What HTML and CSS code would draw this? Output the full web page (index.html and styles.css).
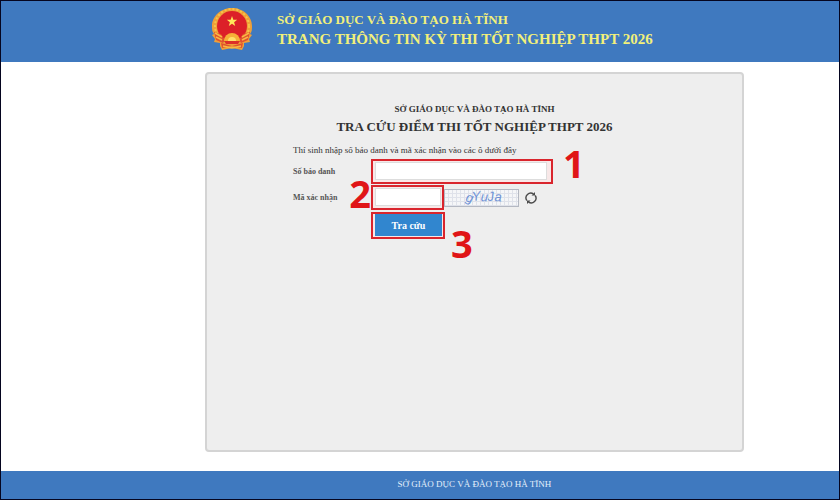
FILE: index.html
```html
<!DOCTYPE html>
<html lang="vi">
<head>
<meta charset="utf-8">
<title>Tra cứu điểm thi tốt nghiệp THPT 2026</title>
<link rel="stylesheet" href="styles.css">
</head>
<body>
<header class="site-header">
  <svg class="emblem" viewBox="0 0 42 44" aria-hidden="true">
    <path fill="#efa038" d="M21 1C10 1 1 9 1 19c0 3 0 6 2 8l-2 1 3 4-1 3 6 1 0 3 2 4 10-2 10 2 2-4 0-3 6-1-1-3 3-4-2-1c2-2 2-5 2-8C41 9 32 1 21 1z"/>
    <circle cx="21" cy="19" r="17" fill="none" stroke="#f6c548" stroke-width="2" stroke-dasharray="2 2"/>
    <circle cx="21" cy="19" r="15" fill="#dc2028"/>
    <path fill="#ffe75a" d="M21 9l1.300 3.700 3.900.100-3.100 2.400 1.100 3.800-3.200-2.200-3.200 2.200 1.100-3.800-3.100-2.400 3.900-.100z"/>
    <path fill="#e0522e" d="M3 25l7 2 4 6-2 3-7-3zM39 25l-7 2-4 6 2 3 7-3zM10 36l11 3 11-3-1 5-10-2-10 2z"/>
    <path fill="none" stroke="#f8b843" stroke-width="1.500" d="M4 26l7 4M5 30l6 3M38 26l-7 4M37 30l-6 3M12 39l9 2 9-2"/>
    <path fill="#f6b038" d="M13 34a8 8 0 0 1 16 0z"/>
    <path fill="#ffe069" d="M17 34a4 4 0 0 1 8 0z"/>
    <path fill="#dc3028" d="M13 34h16l-2 3H15z"/>
  </svg>
  <div class="site-name">
    <p class="site-owner">SỞ GIÁO DỤC VÀ ĐÀO TẠO HÀ TĨNH</p>
    <p class="site-title">TRANG THÔNG TIN KỲ THI TỐT NGHIỆP THPT 2026</p>
  </div>
</header>
<main class="content">
  <section class="card">
    <p class="card-owner">SỞ GIÁO DỤC VÀ ĐÀO TẠO HÀ TĨNH</p>
    <h1 class="card-title">TRA CỨU ĐIỂM THI TỐT NGHIỆP THPT 2026</h1>
    <form class="lookup">
      <p class="hint">Thí sinh nhập số báo danh và mã xác nhận vào các ô dưới đây</p>
      <label class="label" for="sbd">Số báo danh</label>
      <div class="mark mark-wide">
        <input class="field" id="sbd" type="text">
        <span class="step step-right">1</span>
      </div>
      <label class="label" for="code">Mã xác nhận</label>
      <div class="code-row">
        <div class="mark mark-code">
          <input class="field" id="code" type="text">
          <span class="step step-left">2</span>
        </div>
        <svg class="captcha" viewBox="0 0 75 18" role="img" aria-label="gYuJa">
          <defs>
            <pattern id="grid" width="4" height="4" patternUnits="userSpaceOnUse">
              <path d="M0 .5H4M.5 0V4" stroke="#dfe2ea" fill="none"/>
            </pattern>
          </defs>
          <rect width="75" height="18" fill="#f5f6f8"/>
          <rect width="75" height="18" fill="url(#grid)"/>
          <text class="captcha-text" x="21" y="12" rotate="16 -6 4 -4 4">gYuJa</text>
          <rect x=".5" y=".5" width="74" height="17" fill="none" stroke="#b4b8c2"/>
        </svg>
        <button class="refresh" type="button" aria-label="Đổi mã">
          <svg viewBox="0 0 12 12">
            <path d="M1.800 8.500A4.800 4.800 0 0 1 8.500 1.900M10.200 3.500A4.800 4.800 0 0 1 3.500 10.100" fill="none" stroke="#4a4a4a" stroke-width="1.400"/>
            <path d="M6.500 3.500H10V0zM5.500 8.500H2V12z" fill="#4a4a4a"/>
          </svg>
        </button>
      </div>
      <div class="mark mark-button">
        <button class="submit" type="submit">Tra cứu</button>
        <span class="step step-below">3</span>
      </div>
    </form>
  </section>
</main>
<footer class="site-footer">SỞ GIÁO DỤC VÀ ĐÀO TẠO HÀ TĨNH</footer>
</body>
</html>
```
FILE: styles.css
```css
* {
  box-sizing: border-box;
}

body {
  display: flex;
  flex-direction: column;
  min-height: 100vh;
  margin: 0;
  border: 1px solid #05051f;
  background: #fff;
  color: #333;
  font-family: "Liberation Serif", "Times New Roman", serif;
}

p,
h1 {
  margin: 0;
}

.site-header {
  display: flex;
  align-items: flex-start;
  gap: 24px;
  height: 61px;
  padding: 6px 96px 0 210px;
  background: #3f79bf;
}

.emblem {
  flex: none;
  width: 42px;
  height: 44px;
}

.site-name {
  padding-top: 3px;
  color: #f2f07a;
  font-weight: bold;
  white-space: nowrap;
}

.site-owner {
  font-size: 13px;
  line-height: 19px;
}

.site-title {
  font-size: 15px;
  line-height: 20px;
}

.content {
  display: flex;
  flex: 1;
  padding: 10px 95px 19px 204px;
}

.card {
  flex: 1;
  padding: 28px 32px 0 86px;
  border: 2px solid #d4d4d4;
  border-radius: 4px;
  background: #eee;
}

.card-owner,
.card-title {
  margin-right: 54px;
  text-align: center;
  font-weight: bold;
  white-space: nowrap;
}

.card-owner {
  font-size: 9px;
  line-height: 14px;
}

.card-title {
  font-size: 13px;
  line-height: 22px;
}

.lookup {
  display: grid;
  grid-template-columns: 78px 1fr;
  row-gap: 1px;
  align-items: center;
  justify-items: start;
}

.hint {
  grid-column: 1 / -1;
  padding-top: 4px;
  font-size: 9px;
  line-height: 16px;
}

.label {
  font-size: 8px;
  font-weight: bold;
  color: #555;
}

.mark {
  position: relative;
  display: flex;
  border: 2px solid #d9252d;
  background: #f8e8e8;
}

.mark-wide {
  width: 182px;
  height: 25px;
  padding: 1px 4px 2px 2px;
}

.mark-code {
  width: 73px;
  height: 25px;
  padding: 1px 1px 2px 2px;
}

.mark-button {
  grid-column: 2;
  width: 74px;
  height: 27px;
  margin-top: 1px;
  padding: 0 1px 1px 2px;
}

.field {
  width: 100%;
  min-width: 0;
  padding: 0 4px;
  border: 1px solid #ddd;
  background: #fff;
  font: 11px "Liberation Serif", serif;
}

.code-row {
  display: flex;
  align-items: center;
}

.captcha {
  width: 75px;
  height: 18px;
}

.captcha-text {
  fill: #6f93d6;
  font: italic 13px "Liberation Sans", Arial, sans-serif;
}

.refresh {
  display: flex;
  margin-left: 6px;
  padding: 0;
  border: 0;
  background: none;
}

.refresh svg {
  width: 12px;
  height: 12px;
}

.submit {
  width: 100%;
  padding: 0;
  border: 0;
  background: #3186cf;
  color: #fff;
  font: bold 10px "Liberation Serif", serif;
}

.step {
  position: absolute;
  color: #e01517;
  font: bold 38px/38px "Open Sans", sans-serif;
}

.step-right {
  left: 100%;
  top: -17px;
  margin-left: 12px;
}

.step-left {
  right: 100%;
  top: -13px;
  margin-right: 2px;
}

.step-below {
  left: 100%;
  top: 10px;
  margin-left: 8px;
}

.site-footer {
  height: 28px;
  padding: 0 95px 0 204px;
  background: #3f79bf;
  color: #e4f0fb;
  font-size: 9px;
  line-height: 27px;
  text-align: center;
}
```
